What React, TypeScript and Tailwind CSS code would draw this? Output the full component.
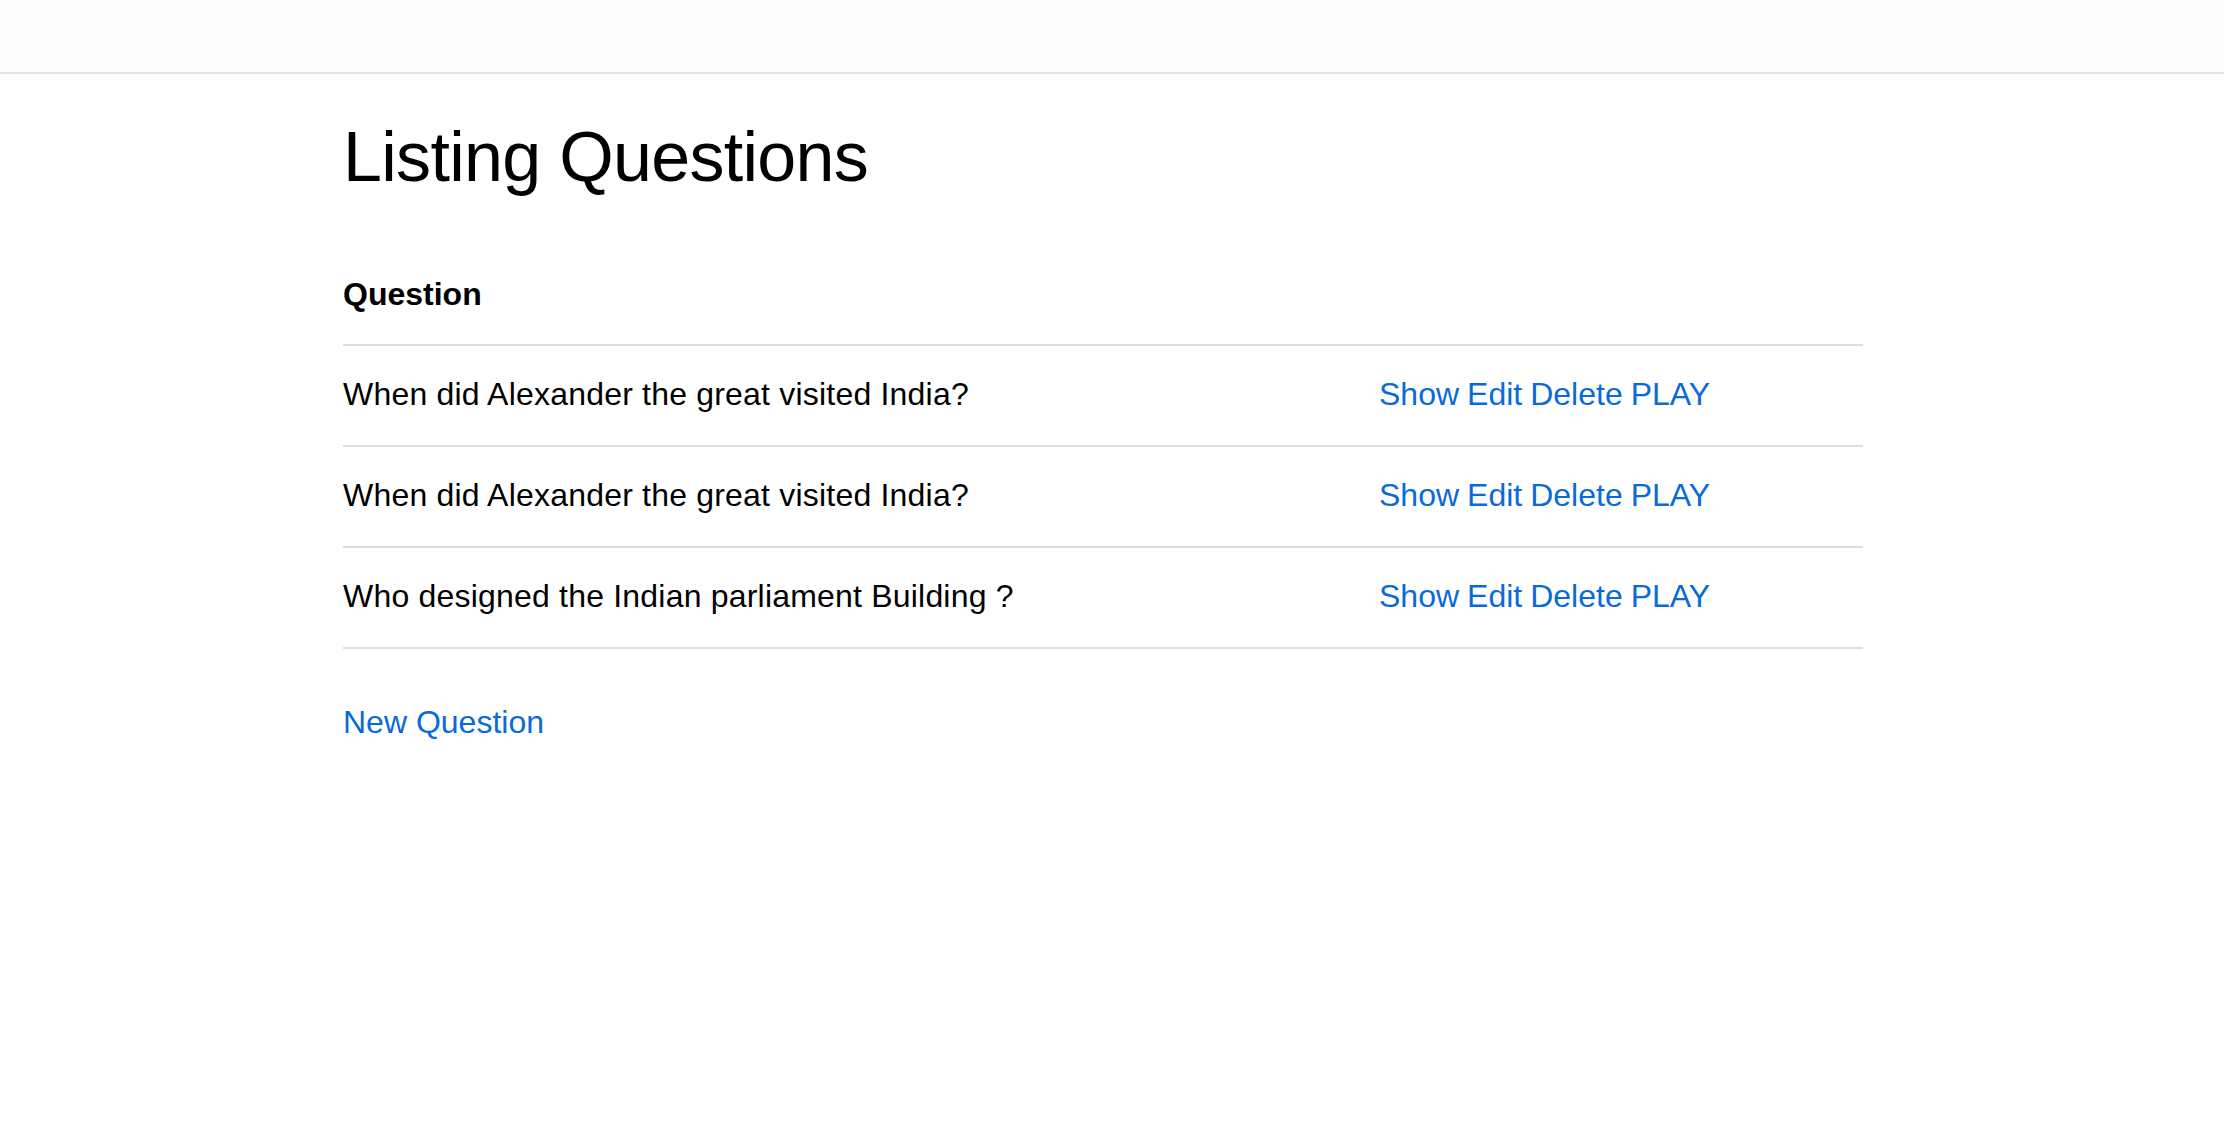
const questions = [
  "When did Alexander the great visited India?",
  "When did Alexander the great visited India?",
  "Who designed the Indian parliament Building ?",
]

const actions = ["Show", "Edit", "Delete", "PLAY"]

export default function App() {
  return (
    <div className="min-h-screen bg-white font-['Liberation_Sans',Arial,sans-serif] text-black">
      <header className="h-[74px] border-b-2 border-[#e6e6e6] bg-[#fcfcfc]" />

      <main className="pl-[343px] pt-[48px]">
        <h1 className="text-[70px] leading-[70px] tracking-[-0.01em] text-black">Listing Questions</h1>

        <div className="mt-[86px] w-[1520px]">
          <div className="grid grid-cols-[1036px_1fr] border-b-2 border-[#dedede] pb-[34px]">
            <div className="text-[32px] font-bold leading-[32px]">Question</div>
            <div />
          </div>

          {questions.map((q, i) => (
            <div
              key={i}
              className="grid grid-cols-[1036px_1fr] border-b-2 border-[#dedede] pt-[32px] pb-[35px] text-[32px] leading-[32px]"
            >
              <div className="tracking-[0.2px]">{q}</div>
              <div className="flex gap-[8px] text-[#0a6ad9]">
                {actions.map((a) => (
                  <a key={a} href="#" className="hover:underline">
                    {a}
                  </a>
                ))}
              </div>
            </div>
          ))}
        </div>

        <a href="#" className="mt-[57px] block w-fit text-[32px] leading-[32px] text-[#0a6ad9] hover:underline">
          New Question
        </a>
      </main>
    </div>
  )
}
